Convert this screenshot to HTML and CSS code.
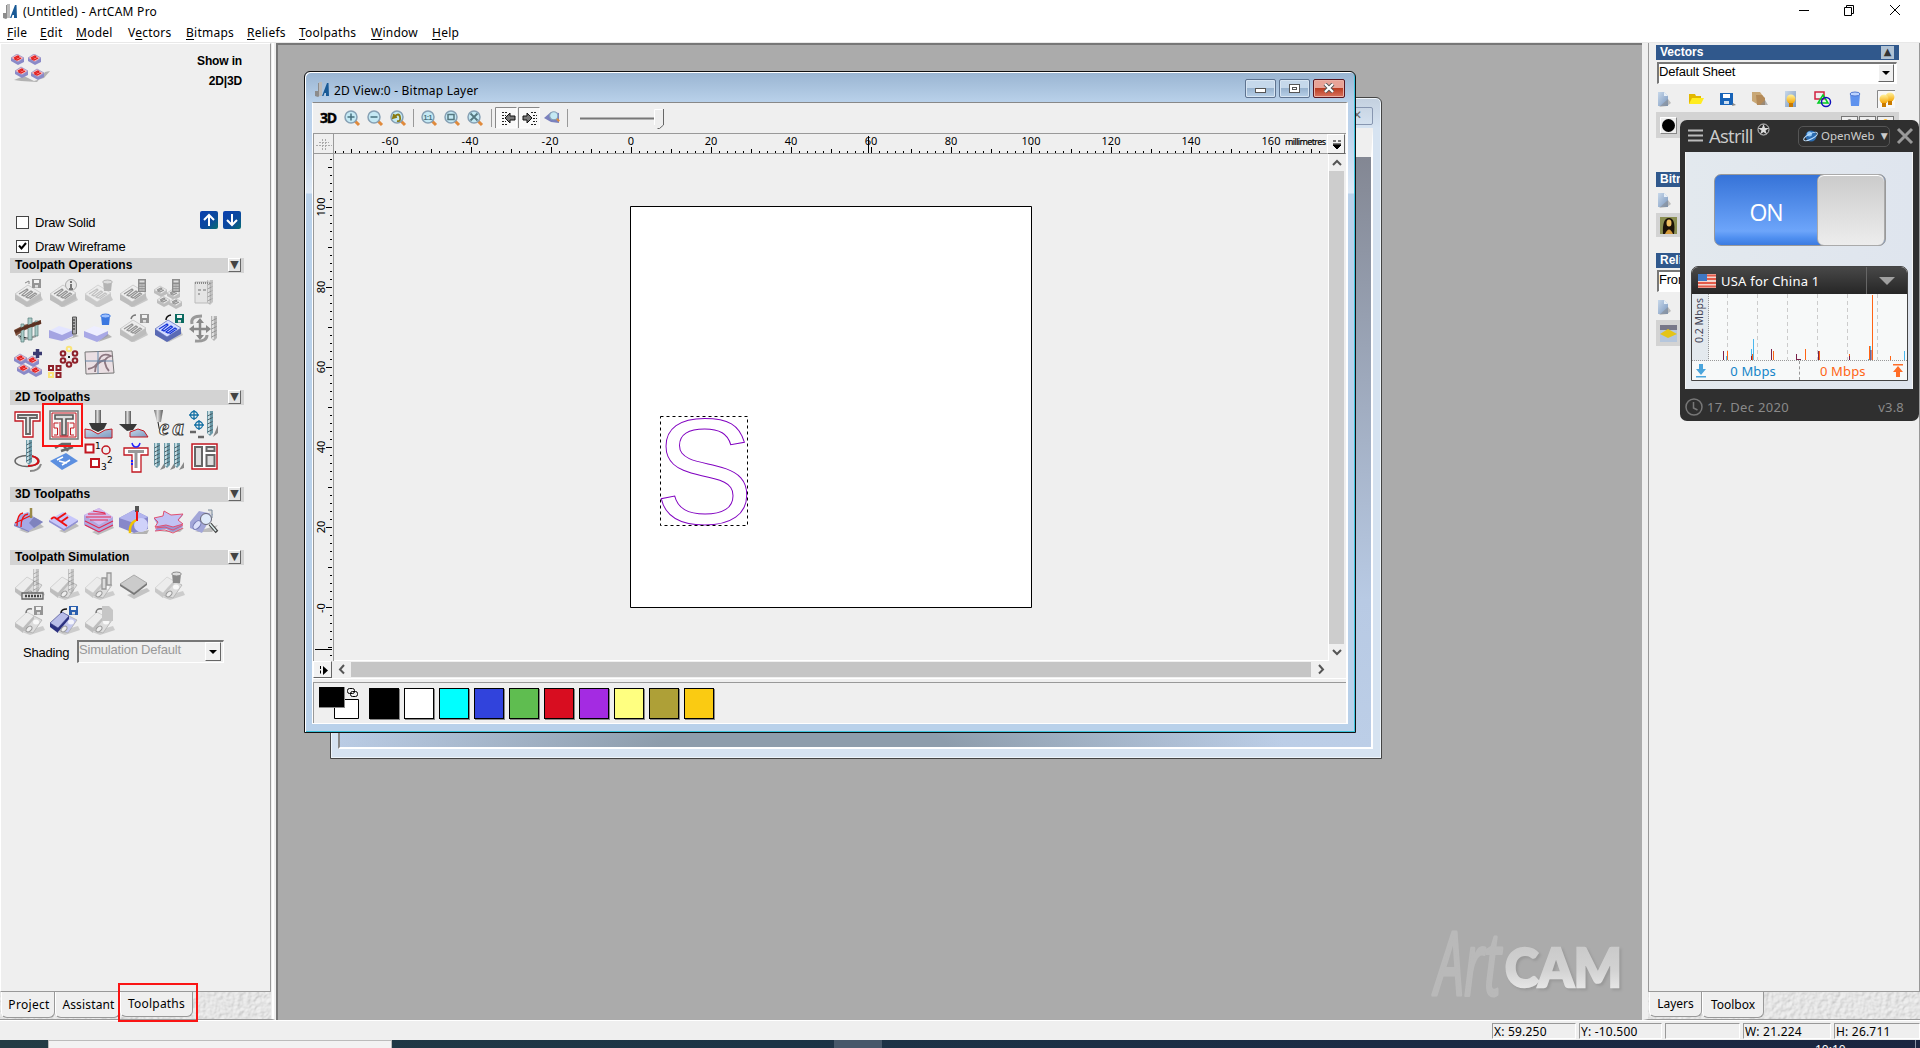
FILE: index.html
```html
<!DOCTYPE html>
<html lang="en">
<head>
<meta charset="utf-8">
<title>(Untitled) - ArtCAM Pro</title>
<link rel="stylesheet" href="styles.css">
</head>
<body>
<svg class="defs" width="0" height="0" aria-hidden="true">
  <defs>
    <filter id="emboss" x="0" y="0" width="100%" height="100%">
      <feTurbulence type="fractalNoise" baseFrequency="0.22" numOctaves="2" seed="4"/>
      <feDiffuseLighting surfaceScale="1" lighting-color="#f2f2f2"><feDistantLight azimuth="225" elevation="62"/></feDiffuseLighting>
    </filter>
    <linearGradient id="steel" x1="0" x2="1" y1="0" y2="0"><stop offset="0" stop-color="#666"/><stop offset=".4" stop-color="#ddd"/><stop offset="1" stop-color="#555"/></linearGradient>
    <linearGradient id="gold" x1="0" x2="0" y1="0" y2="1"><stop offset="0" stop-color="#fff3a0"/><stop offset="1" stop-color="#f5a300"/></linearGradient>
    <linearGradient id="page" x1="0" x2="1" y1="0" y2="1"><stop offset="0" stop-color="#c8d8ea"/><stop offset="1" stop-color="#7b98bf"/></linearGradient>
    <linearGradient id="metal" x1="0" x2="0" y1="0" y2="1"><stop offset="0" stop-color="#c6c6c6"/><stop offset=".55" stop-color="#d2d2d2"/><stop offset=".85" stop-color="#e6e6e6"/><stop offset="1" stop-color="#c8c8c8"/></linearGradient>
    <g id="slab">
      <path d="M10 27l5 1 14-7-2-4z" fill="#999" opacity=".45"/>
      <path d="M1 15v6l12 7v-6zM13 22v6l14-8v-6z" fill="var(--side)"/>
      <path d="M1 15l13-9 13 8-14 9z" fill="var(--top)" stroke="var(--side)" stroke-width=".7"/>
      <path d="M5 15l8-5 1 1-6 5 2 1 7-5 1.500 1-6.500 5 2 1 7-5 1.500 1-7 5" fill="none" stroke="var(--line)" stroke-width="1.200"/>
    </g>
    <g id="tile"><path d="M0 4l6-4 7 4-6 4z" fill="var(--top)" stroke="var(--side)" stroke-width=".7"/><path d="M0 4v3l7 4V8zM7 8v3l6-3V4z" fill="var(--side)"/><path d="M3 4l4-2 1 1-4 2 2 1 4-2" fill="none" stroke="var(--line)" stroke-width="1.200"/></g>
    <g id="floppy"><path d="M0 0h9v9H0z" fill="var(--disk)"/><path d="M2 1h5v3H2z" fill="#f2f2f2"/><path d="M3 6h3v2.500H3z" fill="#ddd"/></g>
    <g id="drill"><path d="M0 0h6v22l-3 3-3-3z" fill="var(--bit)"/><path d="M1 0h2v23H1z" fill="#c4dbe0"/><path d="M.5 5l5-2.500M.5 9l5-2.500M.5 13l5-2.500M.5 17l5-2.500M.5 21l5-2.500" stroke="#40545c" stroke-width=".9"/></g>
    <g id="bucket"><path d="M1 2h9l-1 9H2z" fill="var(--pail)"/><ellipse cx="5.500" cy="2" rx="4.800" ry="2" fill="var(--rim)" stroke="var(--pail)"/></g>
    <g id="calc"><path d="M0 0h8v13H0z" fill="#8d8d8d"/><path d="M1.500 1.500h5v2h-5z" fill="#ddd"/><path d="M1.500 6h5M1.500 8.500h5M1.500 11h5" stroke="#ddd" stroke-dasharray="1.200 .7" stroke-width="1.300"/></g>
    <g id="sim"><path d="M8 26l8 3 15-5-2-4z" fill="#999" opacity=".4"/><path d="M9 24l9-15 10 5-9 13z" fill="var(--low)" stroke="#aaa" stroke-width=".7"/><path d="M1 17L13 6l7 4L9 22z" fill="var(--top)" stroke="var(--side)" stroke-width=".6"/><path d="M1 17v4l8 6v-5z" fill="var(--side)"/><path d="M9 22L20 10v3L9 26z" fill="var(--side)"/><ellipse cx="15" cy="23" rx="3.500" ry="2.200" fill="#eee" stroke="#999" transform="rotate(-45 15 23)"/><ellipse cx="22" cy="16" rx="3" ry="2.500" fill="#fff" opacity=".8"/></g>
    <g id="lens"><path d="M10 10l5 5" stroke="#e08a3c" stroke-width="3"/><circle cx="7" cy="7" r="6" fill="#c4e9f4" stroke="#86a0b4" stroke-width="1.500"/></g>
    <g id="logo"><path d="M0 9h3V1h4v11l-4 3-3-1z" fill="#8c8c8c"/><path d="M4 0h3v14H4z" fill="#bbb"/><path d="M7 14L12 1h1.500L14 14h-3v-3h-1.500L8.500 14z" fill="#195a96"/></g>
    <g id="doc"><path d="M1 1h6l4 4v10H1z" fill="url(#page)"/><path d="M7 1v4h4z" fill="#e8f0f8"/><path d="M11 8l3 4-4 3-8 1z" fill="#888" opacity=".5"/></g>
    <g id="bulb"><circle cx="5" cy="5" r="4.500" fill="url(#gold)"/><path d="M3 9h4v4H3z" fill="#c87a00"/></g>
    <pattern id="hticks" x="317" width="40" height="5" patternUnits="userSpaceOnUse" y="15"><path d="M0 0h1v4H0zM8 2h1v2H8zM16 2h1v2h-1zM24 2h1v2h-1zM32 2h1v2h-1z"/></pattern>
    <pattern id="vticks" x="0" width="30" height="40" patternUnits="userSpaceOnUse" y="13"><path d="M14 0h4v1h-4zM16 8h2v1h-2zM16 16h2v1h-2zM16 24h2v1h-2zM16 32h2v1h-2z"/></pattern>
  </defs>
</svg>

<div class="app">
  <header class="titlebar">
    <svg width="16" height="16"><use href="#logo"/></svg><span class="t-title">(Untitled) - ArtCAM Pro</span>
    <svg class="sysbtns" width="110" height="16" fill="none" stroke="#000"><path d="M1 8.500h10M46.500 5.500h7v8h-7zM48.500 5.500v-2h7v8h-2M92 3l10 10M102 3l-10 10"/></svg>
  </header>
  <nav class="menu">
    <span class="m1"><u>F</u>ile</span><span class="m2"><u>E</u>dit</span><span class="m3"><u>M</u>odel</span><span class="m4">V<u>e</u>ctors</span><span class="m5"><u>B</u>itmaps</span><span class="m6"><u>R</u>eliefs</span><span class="m7"><u>T</u>oolpaths</span><span class="m8"><u>W</u>indow</span><span class="m9"><u>H</u>elp</span>
  </nav>

  <main class="work">
    <aside class="left">
      <div class="left-body">
        <div class="brand">
          <svg class="red" width="42" height="30"><path d="M3 26l10-4 10 5 10-3 6-7-5 1-8 10-16-1z" fill="#999" opacity=".7"/><use href="#tile"/><use href="#tile" x="17"/><use href="#tile" x="4" y="13"/><use href="#tile" x="20" y="15"/></svg>
          <div class="showin">Show in<br>2D|3D</div>
        </div>
        <div class="draw">
          <div class="checks">
            <label><i class="box"></i>Draw Solid</label>
            <label><i class="box"><svg width="11" height="11"><path d="M2 4.500l2.500 3L9 2" fill="none" stroke="#000" stroke-width="2"/></svg></i>Draw Wireframe</label>
          </div>
          <svg class="arrow" width="18" height="18"><path d="M9 15V4M4 9l5-5 5 5" fill="none" stroke="#fff" stroke-width="2"/></svg>
          <svg class="arrow" width="18" height="18"><path d="M9 3v11M4 9l5 5 5-5" fill="none" stroke="#fff" stroke-width="2"/></svg>
        </div>

        <h3 class="sec"><span class="s1">Toolpath Operations</span><i class="fold">▼</i></h3>
        <div class="icons ops">
          <svg class="gray"><use href="#slab"/><path d="M11 4l4-2v3" fill="none" stroke="#888"/><use href="#floppy" x="18" y="0"/></svg>
          <svg class="gray"><use href="#slab"/><circle cx="22" cy="6" r="5.500" fill="#e8e8e8" stroke="#aaa"/><path d="M22 2v2M22 5v5M20 10h4" stroke="#777" stroke-width="2"/></svg>
          <svg class="gray pale"><use href="#slab"/><use href="#bucket" x="18" y="1"/></svg>
          <svg class="gray"><use href="#slab"/><use href="#calc" x="19" y="0"/></svg>
          <svg class="gray"><use href="#tile" y="7"/><use href="#tile" x="13" y="10"/><use href="#tile" x="3" y="17"/><use href="#tile" x="15" y="19"/><use href="#calc" x="18"/></svg>
          <svg class="gray"><path d="M6 3h15v21H6z" fill="#e4e4e4" stroke="#bbb"/><path d="M6 4h15" stroke="#888" stroke-width="2" stroke-dasharray="1 1"/><path d="M9 11h3M14 11h3M9 15h2" stroke="#aaa" stroke-width="2"/><g class="faded"><use href="#drill" x="18" y="1"/></g></svg>

          <svg><path d="M0 16l10-5 17-5v4l-16 6-9 6z" fill="#7a4c38"/><path d="M4 21l4 5 6-2M16 24l6-2" stroke="#999" stroke-width="2"/><g fill="#a9cbc8" stroke="#577b78" stroke-width=".7"><path d="M7 10h3v18H7zM14 4h4v22h-4zM21 7h3v15h-3z"/></g><path d="M1 18l9-4 17-6" stroke="#5b3122" stroke-width="3"/></svg>
          <svg><path d="M0 17l10-5 14 4-11 6z" fill="#e3e5ff"/><path d="M0 16l13 5v6L0 24zM13 21l11-5v6l-11 5z" fill="#a4a4e2"/><path d="M14 27l10-4V20l6 2z" fill="#999" opacity=".7"/><path d="M23.500 3h4v17h-4z" fill="#aaa" stroke="#555"/><path d="M24 6h2M24 9h2M24 12h2M24 15h2" stroke="#222"/></svg>
          <svg class="lilac"><path d="M0 17l10-5 14 4-11 6z" fill="#eef"/><path d="M0 17l13 5v6L0 23zM13 22l11-5v5l-11 6z" fill="#a8a8e6"/><path d="M14 28l14-5-4-3z" fill="#999" opacity=".7"/><use href="#bucket" x="16" y="0"/></svg>
          <svg class="gray"><use href="#slab"/><path d="M12 5q1-4 5-4" fill="none" stroke="#777" stroke-width="1.500"/><use href="#floppy" x="21"/></svg>
          <svg class="blue"><use href="#slab"/><path d="M17 1q-5 1-5 5" fill="none" stroke="#111" stroke-width="1.500"/><use href="#floppy" x="21"/></svg>
          <svg><path d="M3 10q-2-8 10-8M6 27q12 1 12-6" fill="none" stroke="#999" stroke-width="3"/><path d="M11 7v17M3 15h16" stroke="#888" stroke-width="2.500"/><path d="M11 4l4 5H7zM11 26l-4-5h8zM0 15l5-4v8zM22 15l-5-4v8z" fill="#888"/><g class="dull"><use href="#drill" x="22" y="2"/></g></svg>

          <svg class="red"><use href="#tile" y="5"/><use href="#tile" x="12" y="7"/><use href="#tile" x="3" y="15"/><use href="#tile" x="15" y="17"/><path d="M23.500 0v9M19 4.500h9" stroke="#3a3a70" stroke-width="3.500"/></svg>
          <svg fill="none" stroke="#8e2029" stroke-width="2"><path d="M0 17h4v4H0zM7.500 17h4v4h-4zM7.500 24h4v4h-4z"/><circle cx="14" cy="4.500" r="2.300"/><circle cx="26" cy="4.500" r="2.300"/><circle cx="14" cy="11.500" r="2.300"/><circle cx="26" cy="11.500" r="2.300"/><circle cx="20" cy="15.500" r="2.300"/><path d="M0 24h4v4H0z" stroke="#fae47a"/><circle cx="20" cy="0" r="2.300" stroke="#fae47a"/><path d="M19 8h2" stroke="#222"/></svg>
          <svg><path d="M1 3l27-1 2 22-28 1z" fill="#eadfe3" stroke="#777"/><path d="M4 20q8-1 11-9t12-4q-7 2-6 7t4 8M11 23q0-10 10-12" fill="none" stroke="#8c7780" stroke-width="1.800"/><path d="M1 12h28M14 2v23" stroke="#68a"/></svg>
        </div>

        <h3 class="sec"><span class="s2">2D Toolpaths</span><i class="fold">▼</i></h3>
        <div class="icons two">
          <svg><path d="M1 2h25v9h-7v16H9V11H1z" fill="#fff" stroke="#c11721" stroke-width="1.300"/><path d="M4 5h19v3h-7v16h-4V8H4z" fill="#ddd" stroke="#666" stroke-width="1.800"/></svg>
          <svg><path d="M1 1h28v28H1z" fill="#f7f7f7" stroke="#777" stroke-width="1.500"/><path d="M3 3h24v24H3z" fill="none" stroke="#c11721"/><path d="M6 5h18v4h-7v16h-4V9H6z" fill="#ddd" stroke="#555" stroke-width="1.600"/><path d="M9.500 13H5v5h3.500v7H5M20.500 13H25v5h-3.500v7H25M11 12v14h8V12" fill="none" stroke="#c11721"/></svg>
          <svg><path d="M11 0h6v15h-6z" fill="url(#steel)"/><path d="M5 13h18l-3 6-6 3-6-3z" fill="#383838"/><path d="M1 19l6 1 7 4 7-4 7-1v9H1z" fill="url(#page)" stroke="#c11721"/></svg>
          <svg><path d="M6 1h6v14H6z" fill="url(#steel)"/><path d="M0 14h18l-4 6-6 1z" fill="#383838"/><path d="M11 27v-5l8-3 6 2 4 6z" fill="url(#page)" stroke="#c11721"/></svg>
          <svg><path d="M0 0h9L7 12H3z" fill="url(#steel)"/><path d="M4 12q2 15 6 11" fill="none" stroke="#222"/><text x="5" y="25" class="ea" textLength="25">ea</text></svg>
          <svg><g fill="none" stroke="#1672a5" stroke-width="1.300"><circle cx="5" cy="5" r="3.500"/><path d="M5 0v10M0 5h10"/><circle cx="10" cy="15" r="3.500"/><path d="M10 10v10M5 15h10"/></g><path d="M1 22h6M9 27h6" stroke="#666" stroke-width="2.500"/><path d="M24 27l5-12v8z" fill="#888"/><use href="#drill" x="18" y="1"/></svg>

          <svg><ellipse cx="13" cy="18" rx="12" ry="5.500" fill="none" stroke="#666" stroke-width="1.500"/><path d="M14 23q12-1 10-6-2-4-9-4" fill="none" stroke="#d01018" stroke-width="2"/><path d="M16 28q9 0 11-7" fill="none" stroke="#888" stroke-width="2"/><use href="#drill" x="12" y="-3"/></svg>
          <svg><path d="M1 18l16-8 12 8-16 9z" fill="#5c8fe0"/><path d="M8 17l6-3M13 22l8-5M10 18l8 2" stroke="#fff" stroke-width="1.500"/><path d="M6 5l7-4 9 0M12 8l12-4M14 2l5 6" stroke="#666" stroke-width="2.500" fill="none"/></svg>
          <svg><path d="M1.500 1.500h8v8h-8zM7 16h8v8H7z" fill="#fff" stroke="#c11721" stroke-width="2"/><circle cx="22" cy="7" r="4" fill="none" stroke="#c11721" stroke-width="1.500"/><text x="11" y="6" class="nm">1</text><text x="23" y="20" class="nm">2</text><text x="17" y="27" class="nm">3</text></svg>
          <svg><path d="M5 5h24v7h-7v17H13V12H5z" fill="#fff" stroke="#c11721" stroke-width="1.300"/><path d="M9 8.500h16M17 8v17" stroke="#999" stroke-width="3"/><path d="M13 0q1 4 4 4t4-4" fill="none" stroke="#22f" stroke-width="1.500"/><path d="M13 17v6" stroke="#22f" stroke-width="2" stroke-dasharray="2 1"/></svg>
          <svg><path d="M6 27l5-8v6zM16 27l5-8v6zM25 27l5-8v6z" fill="#888"/><use href="#drill" x="0" y="0"/><use href="#drill" x="10" y="0"/><use href="#drill" x="20" y="0"/></svg>
          <svg><path d="M3 1h25v25H3z" fill="#fff" stroke="#c11721" stroke-width="1.500"/><path d="M6 4h7v19H6zM17.500 4h8v4h-8zM17.500 12h8v11h-8z" fill="#ddd" stroke="#666" stroke-width="2"/></svg>
        </div>

        <h3 class="sec"><span class="s2">3D Toolpaths</span><i class="fold">▼</i></h3>
        <div class="icons three">
          <svg><path d="M5 24l8 3 17-6-6-5z" fill="#999" opacity=".6"/><path d="M0 18l6-9 8-3 6 5 9 5-14 9z" fill="#a6a9e6"/><path d="M15 17l5-6 9 5-9 6z" fill="#7f83be"/><path d="M0 18l15 7v1L0 20z" fill="#8183c5"/><path d="M3 20Q3 8 9 7M7 21Q7 9 14 8M1 17l17-8" fill="none" stroke="#e11" stroke-width="1.300"/><path d="M17 2v10" stroke="#9a8b48" stroke-width="2.500"/></svg>
          <svg><path d="M10 25l6 2 14-7-4-3z" fill="#999" opacity=".6"/><path d="M0 14l14-8 15 8-14 9z" fill="#c7c7fb"/><path d="M0 14l15 9v2L0 16zM15 23l14-9v2l-14 9z" fill="#9191d5"/><path d="M5 11l13 9M5 11l-3 2M8 13l9-6M12 16l7-5" stroke="#e11" stroke-width="2"/></svg>
          <svg><path d="M8 26l6 3 16-7-2-3z" fill="#999" opacity=".6"/><path d="M0 9L15 2l14 9v9l-14 7L0 19z" fill="#b1a8de"/><path d="M0 9L15 2l14 9-14 8z" fill="#d4bdf0"/><path d="M4 8l18 0M9 5l12 2M2 11h25M6 14h18M1 15l14 7 14-7M1 19l14 7 14-7" stroke="#e2284e" stroke-width="1.100" fill="none"/></svg>
          <svg><path d="M10 28h18l2-4z" fill="#999" opacity=".7"/><path d="M0 12L15 4l14 7v12l-14 4L0 21z" fill="#8787ca"/><path d="M0 12l15-8 14 7-14 6z" fill="#b3b5ee"/><circle cx="22" cy="19" r="7" fill="#d0d2fa"/><path d="M16 0h4v6h-4z" fill="#555"/><path d="M18 5v10" stroke="#e11" stroke-width="2"/><path d="M17 14q-7 4-6 13" stroke="#f2c500" stroke-width="2.500" fill="none"/></svg>
          <svg><path d="M6 26h20l4-4z" fill="#999" opacity=".6"/><path d="M0 13l9-2 1-5 7 4 12-1-5 6 5 6-10 5-7-3-11 2 3-6z" fill="#9a97d8"/><path d="M0 12l9-2 1-5 7 4 12-1-5 6 5 4-10 3-7-2-11 2 3-5z" fill="#c2c2f4" stroke="#e15070"/><path d="M1 22l10-1 8 3 10-5M1 25l10-1 8 3 10-5" stroke="#e15070" fill="none"/></svg>
          <svg><path d="M6 26h17l6-7z" fill="#999" opacity=".6"/><path d="M1 16L10 5l14 3L13 27l-12-5z" fill="#a2a6d8"/><ellipse cx="8" cy="19" rx="3" ry="5" fill="#dbe0fa" stroke="#7379b3" transform="rotate(40 8 19)"/><path d="M19 4h4v8" fill="#ddd" stroke="#789"/><circle cx="17" cy="13" r="5.500" fill="#dfeafa" stroke="#667"/><path d="M21 18l7 8" stroke="#444" stroke-width="3.500"/><path d="M21 18l6 7" stroke="#dee" stroke-width="1.500"/></svg>
        </div>

        <h3 class="sec"><span class="s3">Toolpath Simulation</span><i class="fold">▼</i></h3>
        <div class="icons simg">
          <svg class="gray"><use href="#sim"/><g class="faded"><use href="#drill" x="19" y="-2"/></g><path d="M8 22h21v6H8z" fill="#ddd" stroke="#666" stroke-width="1.300"/><path d="M11 25h16" stroke="#444" stroke-width="2.500" stroke-dasharray="2 1"/></svg>
          <svg class="gray"><use href="#sim"/><g class="faded"><use href="#drill" x="19" y="-2"/></g></svg>
          <svg class="gray pale"><use href="#sim"/><path d="M18 7h4v11h-4zM23 2h4v12h-4z" fill="#ddd" stroke="#999" stroke-width="1.300"/></svg>
          <svg><path d="M8 24l7 4 16-8-3-3z" fill="#999" opacity=".5"/><path d="M1 13L15 4l13 8-13 10z" fill="#cbcbcb" stroke="#aaa"/><path d="M1 13v2l14 9v-2zM15 22v2l13-10v-2z" fill="#777"/></svg>
          <svg class="gray pale"><use href="#sim"/><g class="darkpail"><use href="#bucket" x="17" y="1"/></g></svg>
          <svg></svg>
          <svg class="gray"><use href="#sim"/><path d="M12 7q0-5 6-4" fill="none" stroke="#777" stroke-width="1.500"/><use href="#floppy" x="20" y="0"/></svg>
          <svg class="indigo"><use href="#sim"/><path d="M12 7q0-4 6-4" fill="none" stroke="#111" stroke-width="1.500"/><use href="#floppy" x="20" y="0"/></svg>
          <svg class="gray"><use href="#sim"/><path d="M12 7q0-5 6-4" fill="none" stroke="#777" stroke-width="1.500"/><path d="M18 0h7l4 4v11H18z" fill="#c6c6c6"/></svg>
        </div>
        <div class="shading"><span>Shading</span><div class="combo off"><em>Simulation Default</em><i></i></div></div>
      </div>
      <div class="tabs">
        <svg class="texture" width="271" height="28"><rect width="271" height="28" filter="url(#emboss)"/></svg>
        <span class="tab p">Project</span><span class="tab a">Assistant</span><span class="tab t on">Toolpaths</span>
      </div>
      <div class="mark tool"></div><div class="mark tabm"></div>
    </aside>

    <section class="mdi">
      <div class="win back">
        <div class="bclose">✕</div>
        <div class="backview"></div>
      </div>
      <div class="win front">
        <div class="wtitle"><svg width="16" height="16"><use href="#logo"/></svg><span class="t-win">2D View:0 - Bitmap Layer</span>
          <b class="wb"><i class="mn"></i></b><b class="wb"><i class="mx"></i></b><b class="wb cl"><svg width="12" height="10"><path d="M2 1l8 8M10 1L2 9" stroke="#555" stroke-width="4"/><path d="M2 1l8 8M10 1L2 9" stroke="#fff" stroke-width="2.200"/></svg></b>
        </div>
        <div class="client">
          <div class="toolbar">
            <svg width="380" height="30">
              <text x="7" y="20" class="d3" textLength="17">3D</text>
              <g transform="translate(-1)">
              <use href="#lens" x="32" y="7"/><path d="M35.500 14h7M39 10.500v7" stroke="#47707e" stroke-width="1.500"/>
              <use href="#lens" x="55" y="7"/><path d="M58.500 14h7" stroke="#47707e" stroke-width="1.500"/>
              <use href="#lens" x="78" y="7"/><path d="M82 11l-1 4 4-1M82 14q5-5 6 0t-3 4" fill="none" stroke="#8a7a10" stroke-width="1.800"/>
              <use href="#lens" x="109" y="7"/><text x="111.500" y="17" class="one" textLength="9">1:1</text>
              <use href="#lens" x="132" y="7"/><path d="M136 11.500h6v5h-6z" fill="none" stroke="#55777f" stroke-width="1.500"/>
              <use href="#lens" x="155" y="7"/><path d="M158.500 10.500l7 7M165.500 10.500l-7 7" stroke="#55777f" stroke-width="1.800"/>
              </g>
              <path d="M100.500 6v18M178.500 6v18M254.500 6v18" stroke="#999"/>
              <path d="M183 4h21v21h-21zM206 4h21v21h-21z" fill="#f9f9f9"/><path d="M182.500 25V4.500h21M205.500 25V4.500h21" fill="none" stroke="#888"/><path d="M203.500 5v20h-20M226.500 5v20h-20" fill="none" stroke="#fff"/>
              <path d="M189 9.500h6M189 12.500h4M189 15.500h4M189 18.500h4M189 21.500h6" stroke="#222" stroke-dasharray="2 1"/><path d="M202 13h-5v-3l-5 5 5 5v-3h5z" fill="#777" stroke="#111"/>
              <path d="M218 9.500h6M220 12.500h4M220 15.500h4M220 18.500h4M218 21.500h6" stroke="#222" stroke-dasharray="2 1"/><path d="M210 13h4v-3l5 5-5 5v-3h-4z" fill="#777" stroke="#111"/>
              <path d="M231 15l7-6 8 1v10l-8-1z" fill="#7a80bd"/><g transform="translate(236 8) scale(.68)"><use href="#lens"/></g>
              <path d="M267 15.500h74" stroke="#777" stroke-width="2"/><path d="M341 6h9v16l-4 4-5-4z" fill="#eee"/><path d="M341.500 22V6.500h8" fill="none" stroke="#fff"/><path d="M350.500 6v16l-4 3.500h-2" fill="none" stroke="#666"/>
            </svg>
          </div>
          <div class="hrule">
            <svg class="corner" width="21" height="20"><path d="M2 11.500h16M8.500 5v12M11.500 5v12M5 8.500h10" stroke="#aaa" stroke-dasharray="2 1"/></svg>
            <svg class="ticks" width="993" height="20">
              <rect y="15" width="1013" height="4" x="20" fill="url(#hticks)" transform="translate(-20)"/>
              <g class="rl" text-anchor="middle"><text x="56" y="11" textLength="17">-60</text><text x="136" y="11" textLength="17">-40</text><text x="216" y="11" textLength="17">-20</text><text x="297" y="11">0</text><text x="377" y="11">20</text><text x="457" y="11">40</text><text x="537" y="11">60</text><text x="617" y="11">80</text><text x="697" y="11">100</text><text x="777" y="11">120</text><text x="857" y="11">140</text><text x="937" y="11">160</text><text x="971.500" y="11" class="mm" textLength="41">millimetres</text></g>
              <path d="M57.500 13v6M137.500 13v6M217.500 13v6M297.500 13v6M377.500 13v6M457.500 13v6M537.500 13v6M617.500 13v6M697.500 13v6M777.500 13v6M857.500 13v6M937.500 13v6M534.500 2v17" stroke="#000"/>
            </svg>
            <svg class="sq" width="18" height="20"><path d="M5 6h3M10 6h3M5 9h8M9 14L5 10h8z" stroke="#000" fill="#000"/></svg>
          </div>
          <div class="mid">
            <div class="vrule"><svg width="19" height="507">
              <rect y="1" x="10" width="8" height="505" fill="url(#vticks)"/>
              <g class="rl" text-anchor="middle"><text transform="translate(11 53) rotate(-90)">100</text><text transform="translate(11 133) rotate(-90)">80</text><text transform="translate(11 213) rotate(-90)">60</text><text transform="translate(11 293) rotate(-90)">40</text><text transform="translate(11 373) rotate(-90)">20</text><text transform="translate(11 454) rotate(-90)">-0</text></g>
              <path d="M12 53.500h6M12 133.500h6M12 213.500h6M12 293.500h6M12 373.500h6M12 453.500h6M1 495.500h17" stroke="#000"/></svg></div>
            <div class="canvas"><svg width="994" height="507">
              <path d="M296.500 52.500h401v401h-401z" fill="#fff" stroke="#000"/>
              <text x="320.500" y="370" class="shape" textLength="99" lengthAdjust="spacingAndGlyphs">S</text>
              <path d="M326.500 262.500h87v109h-87z" fill="none" stroke="#000" stroke-dasharray="3 3"/></svg></div>
            <div class="vscroll"><svg width="16" height="17"><path d="M4 11l4-4 4 4" fill="none" stroke="#555" stroke-width="2"/></svg><div class="vthumb"></div><svg width="16" height="17"><path d="M4 6l4 4 4-4" fill="none" stroke="#555" stroke-width="2"/></svg></div>
          </div>
          <div class="hscroll"><svg class="sq" width="19" height="17"><path d="M6.500 4v8" stroke="#000" stroke-dasharray="3 1.500"/><path d="M9 4l5 4.500-5 4.500z"/></svg><svg width="19" height="17"><path d="M12 4L8 8.500l4 4" fill="none" stroke="#555" stroke-width="2"/></svg><div class="hthumb"></div><svg width="35" height="17"><path d="M8 4l4 4.500-4 4" fill="none" stroke="#555" stroke-width="2"/></svg></div>
          <div class="palette">
            <svg width="50" height="36"><path d="M20.500 15.500h24v19h-24z" fill="#fff" stroke="#000"/><path d="M5 3h26v21H5z" fill="#888"/><path d="M5 3h25v20H5z"/><rect x="33.500" y="4.500" width="7" height="5" rx="2" fill="none" stroke="#000"/><rect x="36.500" y="7.500" width="7" height="5" rx="2" fill="none" stroke="#000"/></svg>
            <i class="sw k"></i><i class="sw w"></i><i class="sw c"></i><i class="sw b"></i><i class="sw g"></i><i class="sw r"></i><i class="sw v"></i><i class="sw y"></i><i class="sw o"></i><i class="sw amber"></i>
          </div>
        </div>
      </div>
      <svg class="mark-logo" width="215" height="110"><text x="12" y="78" class="art" textLength="66" lengthAdjust="spacingAndGlyphs">Art</text><text x="82" y="70" class="cam" fill="url(#metal)" stroke="url(#metal)" textLength="117" lengthAdjust="spacingAndGlyphs">CAM</text></svg>
    </section>

    <aside class="right">
      <div class="right-body">
        <h4>Vectors<i>▲</i></h4>
        <div class="combo"><em>Default Sheet</em><i></i></div>
        <div class="ricons">
          <svg><use href="#doc"/></svg>
          <svg><path d="M0 3h6l1 2h5v8H0z" fill="#e3b800"/><path d="M3 7h12l-3 6H0z" fill="#ffec20"/></svg>
          <svg><path d="M0 2h13v12H0z" fill="#1763b8"/><path d="M3 3h7v4H3z" fill="#fff"/><path d="M4 10h5v3H4z" fill="#cde"/><path d="M13 12l3 2-4 1z" fill="#888"/></svg>
          <svg><path d="M0 1h8l3 4v8l-6 0-5-3z" fill="#c9a877"/><path d="M4 4h6l3 3v7H5z" fill="#b48a58"/><path d="M13 9l3 5H8z" fill="#888" opacity=".6"/></svg>
          <svg><path d="M2 0h11v16H2z" fill="url(#page)"/><use href="#bulb" x="3" y="3"/></svg>
          <svg><path d="M0 1h9v7H0z" fill="none" stroke="#d22040" stroke-width="1.500"/><path d="M8 4l5 8H3z" fill="none" stroke="#0c2" stroke-width="1.500"/><circle cx="11" cy="11" r="4.500" fill="none" stroke="#11b" stroke-width="1.500"/></svg>
          <svg><path d="M3 3h10l-1 12H4z" fill="#5e92ee"/><ellipse cx="8" cy="3" rx="5" ry="2" fill="#bcd4ff" stroke="#5078d0"/></svg>
          <svg><path d="M-1-1h18v18H-1z" fill="#f8f8f8"/><path d="M-.5 17V-.5H17" fill="none" stroke="#888"/><use href="#bulb" x="7" y="1"/><use href="#bulb" x="1" y="3"/></svg>
        </div>
        <div class="layer l1"><b class="dot"><i></i></b><b class="mini"></b><b class="mini"></b><b class="mini bulb"></b></div>
        <h4 class="h2">Bitmaps</h4>
        <svg class="ri" width="16" height="16"><use href="#doc"/></svg>
        <div class="layer l2"><svg width="17" height="17"><path d="M0 0h17v17H0z" fill="#8b8f52"/><path d="M3 17q-1-16 6-16t5 16z" fill="#1b1208"/><ellipse cx="9" cy="6" rx="2.500" ry="3.500" fill="#eebf62"/><path d="M5 17q4-9 8 0" fill="#d39a3c"/></svg></div>
        <h4 class="h3">Reliefs</h4>
        <div class="combo"><em>Front Relief</em><i></i></div>
        <svg class="ri r2" width="16" height="16"><use href="#doc"/></svg>
        <div class="layer l3"><svg width="17" height="17"><path d="M0 0h17v17H0z" fill="#b5c6dc"/><path d="M0 0h17v5H0z" fill="#778"/><path d="M0 9l8-5 9 5-9 4z" fill="#e4c418"/></svg></div>
      </div>
      <div class="tabs">
        <svg class="texture" width="272" height="28"><rect width="272" height="28" filter="url(#emboss)"/></svg>
        <span class="tab l on">Layers</span><span class="tab x">Toolbox</span>
      </div>
    </aside>
  </main>

  <footer class="status"><span class="f1">X: 59.250</span><span class="f2">Y: -10.500</span><span class="f3"></span><span class="f4">W: 21.224</span><span class="f5">H: 26.711</span></footer>
  <div class="taskbar"><div class="search"></div><div class="active"></div><div class="clock">10:10</div><div class="edge"></div></div>
</div>

<div class="astrill">
  <div class="ahead">
    <svg width="16" height="16"><path d="M0 2.500h15M0 7.500h15M0 12.500h15" stroke="#bbb" stroke-width="2"/></svg>
    <span class="aname">Astrill</span>
    <svg class="star" width="13" height="13"><circle cx="6.500" cy="6.500" r="5.500" fill="none" stroke="#ccc"/><path d="M6.500 1l1.500 4h4L8.500 7.500l1.500 4-3.500-2.500L3 11.500l1.500-4L1 5h4z" fill="#ddd"/></svg>
    <div class="mode"><svg width="15" height="14"><circle cx="8" cy="7" r="5.500" fill="#2c6cb0"/><circle cx="6.500" cy="5" r="2.500" fill="#8cc4f4"/><ellipse cx="7.500" cy="7.500" rx="7.500" ry="2.500" fill="none" stroke="#bfe0ff" transform="rotate(-28 7.500 7.500)"/></svg><span>OpenWeb</span><i>▼</i></div>
    <svg width="18" height="18"><path d="M2 2l14 14M16 2L2 16" stroke="#999" stroke-width="3"/></svg>
  </div>
  <div class="abody">
    <div class="toggle"><span>ON</span><i></i></div>
    <div class="server">
      <div class="sname"><svg width="18" height="14"><path d="M0 0h18v14H0z" fill="#f3d5cd"/><path d="M0 1.500h18M0 5h18M0 9h18M0 12.500h18" stroke="#e35b4a" stroke-width="1.800"/><path d="M0 0h9v7H0z" fill="#3f78c4"/></svg><span>USA for China 1</span><i><svg width="16" height="8"><path d="M0 0h16L8 8z" fill="#a0a0a0"/></svg></i></div>
      <div class="chart">
        <svg width="215" height="67"><path d="M17 0h198v67H17z" fill="#f7f9f9"/><text transform="translate(11 49) rotate(-90)" class="mb" textLength="45">0.2 Mbps</text>
        <path d="M16.500 0v67M0 66.500h215" stroke="#999" stroke-dasharray="1 1"/><path d="M35.500 0v66M65.500 0v66M95.500 0v66M125.500 0v66M155.500 0v66M185.500 0v66" stroke="#ccc" stroke-dasharray="4 3"/>
        <path d="M59.500 55v11M61.500 45v21M34.500 62v4M178.500 52v14M176 65.500h3M212.500 57v9" stroke="#4bb8ee"/><path d="M35.500 57v9M60.500 60v6M81.500 57v9M113.500 55v11M127.500 57v9M157.500 60v6M177.500 52v14M180.500 1v65M198.500 62v4" stroke="#ff6414"/><path d="M31.500 57v9M79.500 55v11M104.500 60v6M105 65.500h4M126.500 57v9M157.500 62v4M179 56v10M59.500 62v4" stroke="#79214a"/></svg>
      </div>
      <div class="rates"><div class="dn"><svg width="10" height="14"><path d="M3 0h4v5h3l-5 6-5-6h3zM0 12h10v1.500H0z" fill="#4ba5dc"/></svg><span>0 Mbps</span></div><div class="up"><span>0 Mbps</span><svg width="10" height="14"><path d="M3 13h4V8h3L5 2 0 8h3zM0 0h10v1.500H0z" fill="#ff6e28"/></svg></div></div>
    </div>
  </div>
  <div class="afoot"><svg width="18" height="18" fill="none" stroke="#777"><circle cx="9" cy="9" r="8" stroke-width="1.500"/><path d="M8.500 4v6l4 2" stroke-width="1.500"/></svg><span class="date">17. Dec 2020</span><span class="ver">v3.8</span></div>
</div>
</body>
</html>
```
FILE: styles.css
```css
* { box-sizing: border-box; }
body { margin: 0; width: 1920px; height: 1048px; overflow: hidden; position: relative; font: 12px/16px "Noto Sans", "Open Sans", sans-serif; color: #000; background: #efefef; }
i, em { font-style: normal; }
svg { display: block; flex: none; }
.defs { position: absolute; }
.app { display: flex; flex-direction: column; height: 1048px; }
.titlebar { height: 23px; background: #fff; display: flex; align-items: center; padding: 0 0 0 3px; }
.t-title { margin-left: 4px; letter-spacing: .27px; padding-top: 1px; }
.sysbtns { margin-left: auto; margin-right: 12px; margin-top: -4px; }
.menu { height: 19px; background: #fff; display: flex; padding-left: 7px; line-height: 19px; letter-spacing: .25px; }
.menu span { white-space: nowrap; }
.m1 { width: 33px; } .m2 { width: 36px; } .m3 { width: 52px; } .m4 { width: 58px; } .m5 { width: 61px; } .m6 { width: 52px; } .m7 { width: 72px; } .m8 { width: 61px; }
.menu u { text-underline-offset: 2px; }
.work { flex: none; height: 978px; display: flex; border-top: 1px solid #e8e8e8; }

.left { width: 276px; position: relative; display: flex; flex-direction: column; background: #efefef; border-right: 4px solid #fff; border-bottom: 1px solid #999; }
.left::after { content: ""; position: absolute; right: -4px; top: 0; bottom: 0; width: 2px; background: #efefef; }
.left-body { height: 949px; width: 271px; border-right: 1px solid #999; border-left: 1px solid #fff; border-bottom: 1px solid #999; border-top: 1px solid #fff; font: 12px/15px "Liberation Sans", Arial, sans-serif; }
.brand { height: 166px; padding: 10px 28px 0 10px; display: flex; justify-content: space-between; align-items: flex-start; }
.showin { font-weight: bold; line-height: 20px; text-align: right; margin-top: -3px; letter-spacing: -.15px; }
.draw { height: 48px; display: flex; padding-left: 15px; }
.checks { width: 184px; font-size: 13px; }
.checks label { display: flex; align-items: center; height: 23px; gap: 6px; margin-top: 1px; letter-spacing: -.25px; }
.box { width: 13px; height: 13px; background: #fff; border: 1px solid #444; }
.arrow { margin: 1px 5px 0 0; border-radius: 2px; background: linear-gradient(135deg, #0a3fb0, #0b4a9c 60%, #087070); }
.sec { margin: 0 0 0 9px; width: 234px; height: 15px; background: #d3d3d3; font: bold 12px/15px "Liberation Sans", Arial, sans-serif; display: flex; padding-left: 5px; justify-content: space-between; }
.sec span { white-space: nowrap; }
.s1 { letter-spacing: .05px; }
.fold { width: 13px; height: 14px; margin-right: 3px; border: 1px solid #fff; border-right-color: #666; border-bottom-color: #666; font: 11px/12px "DejaVu Sans"; color: #444; display: flex; justify-content: center; align-items: center; background: #e4e4e4; }
.icons { display: grid; grid-template-columns: repeat(6, 35px); padding-left: 13px; align-content: start; justify-items: start; }
.icons svg { width: 32px; height: 29px; overflow: visible; --bit: #6c9aa8; }
.ops { height: 117px; grid-auto-rows: 35px; padding-top: 6px; }
.two { height: 82px; grid-auto-rows: 33px; padding-top: 5px; }
.three { height: 48px; grid-auto-rows: 35px; padding-top: 4px; }
.simg { height: 75px; grid-auto-rows: 35px; padding-top: 6px; }
.gray { --top: #ececec; --side: #bdbdbd; --line: #929292; --disk: #959595; --pail: #b4b4b4; --rim: #ddd; --low: #dcdcdc; }
.pale { --line: #c0c0c0; --side: #c8c8c8; }
.blue { --top: #d4dcff; --side: #5a6ab4; --line: #1434d8; --disk: #0a6a60; }
.red { --top: #f8b8b8; --side: #8a8ac8; --line: #e01818; }
.lilac { --pail: #3c78e0; --rim: #9cc0ff; }
.indigo { --top: #b9bde8; --side: #2b3080; --disk: #2a5fae; --low: #c4c8ee; }
.darkpail { --pail: #8a8a8a; }
.dull { opacity: .6; filter: grayscale(1); }
.faded { opacity: .45; filter: grayscale(1); }
.ea { font: italic bold 23px "Liberation Serif", serif; fill: #fff; stroke: #333; stroke-width: .9px; }
.nm { font: 9px "DejaVu Sans", sans-serif; }
.shading { display: flex; padding-left: 22px; font-size: 13px; line-height: 24px; letter-spacing: -.2px; }
.shading span { width: 54px; padding-top: 1px; white-space: nowrap; }
.combo { display: flex; background: #fff; border: 2px solid #777; border-right: 1px solid #fff; border-bottom: 1px solid #fff; width: 242px; height: 22px; justify-content: space-between; font: 13px/15px "Liberation Sans", Arial, sans-serif; letter-spacing: -.2px; white-space: nowrap; }
.combo.off { background: #efefef; width: 147px; height: 23px; color: #999; line-height: 15px; }
.combo i { width: 16px; margin: 0 2px 1px 0; border: 1px solid #fff; border-right-color: #666; border-bottom-color: #666; background: #f0f0f0; display: flex; justify-content: center; align-items: center; }
.combo i::before { content: ""; border: 4px solid transparent; border-top-color: #000; border-bottom: 0; }
.tabs { height: 27px; position: relative; display: flex; padding-left: 1px; align-items: flex-start; overflow: hidden; }
.texture { position: absolute; left: 0; top: 0; }
.tab { position: relative; height: 26px; background: #efefef; border: 1px solid #999; border-top: 0; border-left-color: #fff; border-radius: 0 0 6px 6px; display: flex; justify-content: center; align-items: center; padding-top: 1px; }
.tab.on { margin-top: -1px; padding-top: 0; }
.p { width: 54px; letter-spacing: .3px; padding-left: 2px; } .a { width: 65px; letter-spacing: .15px; padding-left: 2px; } .t { width: 73px; letter-spacing: .2px; } .l { width: 53px; } .x { width: 62px; }
.mark { position: absolute; border: 2px solid #fa1414; }
.tool { left: 42px; top: 360px; width: 41px; height: 44px; }
.tabm { left: 118px; top: 940px; width: 80px; height: 39px; z-index: 2; }

.mdi { position: relative; width: 1366px; background: #ababab; border-left: 2px solid #777; border-top: 2px solid #777; overflow: hidden; flex: none; }
.win { position: absolute; }
.back { left: 52px; top: 52px; width: 1052px; height: 662px; border: 1px solid #444; border-radius: 6px 6px 0 0; background: linear-gradient(#c3d0df, #d6e3f1 30px); padding: 30px 8px 9px 7px; box-shadow: inset 0 0 0 1px #eef5fb; }
.backview { height: 100%; border-top: 29px solid #efefef; border-right: 2px solid #fff; border-bottom: 2px solid #fff; border-left: 2px solid #888; background: radial-gradient(ellipse 480px 90px at 45% 100%, #8e9dac 30%, transparent), linear-gradient(#838793, #b8cae4 75%, #bccee7); }
.bclose { position: absolute; right: 8px; top: 9px; width: 32px; height: 18px; border: 1px solid #8796b0; border-radius: 2px; color: #666; text-align: center; font: bold 12px/15px "DejaVu Sans"; }
.front { left: 26px; top: 26px; width: 1052px; height: 662px; border: 1px solid #111; border-radius: 6px 6px 0 0; background: linear-gradient(#99b4d1, #b9d1ea 30px, #bdd3ec 60px, #dfeaf6 121px, #b9d1ea 122px); box-shadow: inset 1px 1px #fff, inset -1px -1px #3cc3dc; padding: 0 7px 9px 7px; }
.wtitle { height: 30px; display: flex; align-items: center; padding: 5px 0 0 3px; }
.t-win { margin-left: 3px; padding-top: 2px; letter-spacing: .2px; flex: 1; }
.wb { width: 31px; height: 19px; margin: -3px 0 0 2px; border: 1px solid #5e7390; border-radius: 2px; background: linear-gradient(#c5d8eb 48%, #98b3cf 50%, #b8d0e8); box-shadow: inset 0 0 0 1px #d7e5f3; display: flex; align-items: center; justify-content: center; }
.wb + .wb { margin-left: 3px; }
.cl { width: 32px; margin-right: 3px; background: linear-gradient(#e8a397 45%, #bb3d22 50%, #d87460); border-color: #5a1620; box-shadow: inset 0 0 0 1px #eab0a5; }
.mn { width: 11px; height: 5px; margin-top: 5px; border: 1px solid #555; background: #fff; }
.mx { width: 11px; height: 9px; border: 1px solid #555; background: #fff; box-shadow: inset 0 0 0 2px #fff, inset 0 0 0 3px #555; }
.client { background: #efefef; height: 622px; width: 1036px; border-top: 1px solid #888; border-left: 1px solid #fff; border-right: 2px solid #fff; border-bottom: 1px solid #fff; display: flex; flex-direction: column; }
.toolbar { height: 30px; }
.d3 { font: bold 14px "Open Sans"; stroke: #000; stroke-width: .4px; }
.one { font: bold 7px "Liberation Sans"; fill: #47707e; }
.hrule { height: 21px; display: flex; border-top: 1px solid #999; border-bottom: 1px solid #999; }
.corner { border-left: 1px solid #999; border-right: 1px solid #999; }
.ticks { overflow: visible; }
.rl { font: 11px "Noto Sans", sans-serif; }
.mm { font-size: 9px; stroke: #000; stroke-width: .2px; }
.sq { border: 1px solid #fff; border-right-color: #666; border-bottom-color: #666; background: #f2f2f2; }
.mid { height: 507px; display: flex; }
.vrule { width: 21px; border-left: 1px solid #999; border-right: 1px solid #999; flex: none; }
.canvas { width: 995px; border-right: 1px solid #fff; border-bottom: 1px solid #fff; flex: none; height: 507px; }
.shape { font: 151px "Liberation Sans", Arial, sans-serif; fill: none; stroke: #8000c0; }
.vscroll { display: flex; flex-direction: column; width: 17px; }
.vthumb { flex: 1; background: #cdcdcd; width: 15px; }
.hscroll { height: 18px; display: flex; border-bottom: 1px solid #fff; }
.hthumb { flex: 1; background: #c5c5c5; height: 15px; margin-top: 1px; }
.palette { margin-top: 3px; height: 41px; border-top: 1px solid #999; border-left: 1px solid #999; display: flex; align-items: flex-start; gap: 5px; padding-top: 1px; }
.sw { width: 30px; height: 31px; margin-top: 4px; border: 1px solid #000; box-shadow: 1px 1px #888; }
.k { background: #000; } .w { background: #fff; } .c { background: #0ff; } .b { background: #3143dc; } .g { background: #5fbd50; } .r { background: #d80d20; } .v { background: #a42be2; } .y { background: #ffff80; } .o { background: #aea037; } .amber { background: #facb12; }
.mark-logo { position: absolute; left: 1145px; top: 872px; }
.cam { font: 900 53px Lato, sans-serif; stroke-width: 2.5px; filter: drop-shadow(2px 2px 1px #999); }
.art { font: italic 88px "Open Sans", sans-serif; fill: #b9b9b9; stroke: #b9b9b9; stroke-width: 3px; stroke-linejoin: round; }

.right { width: 277px; margin-left: 1px; border-left: 5px solid #efefef; display: flex; flex-direction: column; box-shadow: inset 1px 0 #999; border-bottom: 1px solid #999; }
.right-body { height: 949px; padding: 2px 0 0 8px; border-bottom: 1px solid #999; border-right: 1px solid #999; }
.right h4 { margin: 0; width: 243px; height: 15px; background: #30588c; color: #fff; font: bold 12px/15px "Liberation Sans", Arial, sans-serif; padding-left: 4px; display: flex; justify-content: space-between; }
.right h4 i { width: 13px; height: 13px; margin: 1px 5px; background: #b0c2d4; color: #333; font: 10px/12px "DejaVu Sans"; text-align: center; }
.right .combo { margin: 2px 0 0 1px; width: 240px; }
.ricons { display: flex; gap: 15.600px; padding: 7px 0 5px 1px; }
.ricons svg { width: 16px; height: 16px; overflow: visible; }
.layer { width: 243px; background: #d3d3d3; display: flex; }
.l1 { height: 26px; padding: 5px 4px; }
.dot { width: 17px; height: 17px; background: #eee; border: 1px solid #fff; border-right-color: #888; border-bottom-color: #888; padding: 1px; margin-right: 164px; }
.dot i { display: block; width: 13px; height: 13px; border-radius: 50%; background: #000; }
.mini { width: 17px; height: 17px; margin: -1px 1px 0 0; background: radial-gradient(circle at 50% 40%, #888 30%, #eee 35%); border: 1px solid #777; }
.bulb { background: radial-gradient(circle at 50% 40%, #fb3 30%, #eee 35%); }
.h2 { margin-top: 34px !important; }
.ri { margin: 5px 0 5px 1px; }
.l2 { height: 24px; padding: 4px; }
.h3 { margin-top: 16px !important; }
.l3 { height: 26px; padding: 5px 4px; }
.r2 { margin-top: 7px; }

.status { height: 20px; display: flex; border-top: 1px solid #fff; padding: 2px 0 1px 1492px; gap: 3px; }
.status span { border: 1px solid #999; border-right-color: #fff; border-bottom-color: #fff; padding-left: 1px; line-height: 15px; white-space: nowrap; letter-spacing: .2px; }
.f1 { width: 84px; } .f2 { width: 83px; } .f3 { width: 75px; } .f4 { width: 88px; } .f5 { width: 86px; }
.taskbar { height: 8px; background: linear-gradient(90deg, #233c45, #1c3446 40%, #1b2a44 75%, #1a2540); display: flex; overflow: hidden; }
.search { margin-left: 48px; width: 344px; background: #f2f2f2; border: 1px solid #bbb; border-bottom: 0; }
.active { margin-left: 442px; width: 48px; background: #46586a; }
.clock { margin-left: 933px; width: 100px; color: #fff; font-size: 12px; line-height: 16px; padding-top: 2px; }
.edge { width: 1px; background: #8a93a5; }

.astrill { position: absolute; left: 1680px; top: 120px; width: 239px; height: 301px; border-radius: 7px; background: #2f2f2f; display: flex; flex-direction: column; font-family: "Noto Sans", sans-serif; }
.ahead { height: 32px; display: flex; align-items: center; padding-left: 8px; color: #ccc; }
.aname { font: 18.500px/24px "Open Sans", sans-serif; letter-spacing: -.7px; margin-left: 5px; width: 48px; white-space: nowrap; }
.star { margin: -13px 0 0 0; }
.mode { margin: 0 6px 0 28px; width: 92px; height: 21px; border: 1px solid #555; border-radius: 5px; display: flex; align-items: center; padding-left: 4px; gap: 3px; font-size: 11.500px; }
.mode i { font: 9px "DejaVu Sans"; margin-left: 3px; }
.abody { margin: 0 6px 0 5px; height: 237px; background: linear-gradient(90deg, #e3e9ee, #dfe5ee); border: 1px solid #f4f4f4; border-width: 0 1px; padding: 22px 5px 0; }
.toggle { margin: 0 22px 0 23px; height: 72px; width: 172px; border-radius: 7px; border: 1px solid #999; background: linear-gradient(#3673d8, #6da5fa 80%, #4f8ff0 90%, #3c7be0); display: flex; align-items: center; color: #fff; }
.toggle span { flex: 1; text-align: center; font: 23px "Open Sans", sans-serif; letter-spacing: -1px; padding-top: 3px; }
.toggle i { width: 68px; height: 72px; border-radius: 7px; border: 1px solid #aaa; background: linear-gradient(#cbcbcb, #ededed); box-shadow: inset 0 1px #fff; }
.server { margin-top: 20px; border: 1px solid #444; width: 217px; height: 115px; border-radius: 7px 7px 0 0; background: #f7f9f9; overflow: hidden; display: flex; flex-direction: column; }
.sname { height: 27px; flex: none; background: linear-gradient(#484848, #262626); color: #fff; display: flex; align-items: center; font-size: 13px; padding-left: 6px; }
.sname span { margin-left: 5px; flex: 1; white-space: nowrap; letter-spacing: .22px; }
.sname i { width: 41px; height: 27px; border-left: 1px solid #666; display: flex; align-items: center; justify-content: center; }
.chart { height: 67px; background: #e3e9ee; }
.mb { font: 10.500px "Noto Sans"; fill: #445; }
.rates { flex: 1; display: flex; font-size: 13px; letter-spacing: .15px; }
.rates div { width: 108px; flex: none; display: flex; align-items: center; justify-content: space-between; padding: 0 23px 0 4px; }
.dn { color: #1484c8; border-right: 1px dashed #999; }
.rates .up { color: #ff6414; padding: 0 5px 0 20px; }
.afoot { flex: 1; display: flex; align-items: center; padding: 3px 15px 0 5px; color: #8a8a8a; font-size: 13px; }
.date { margin-left: 4px; flex: 1; letter-spacing: .35px; }
.ver { letter-spacing: .2px; }
```
